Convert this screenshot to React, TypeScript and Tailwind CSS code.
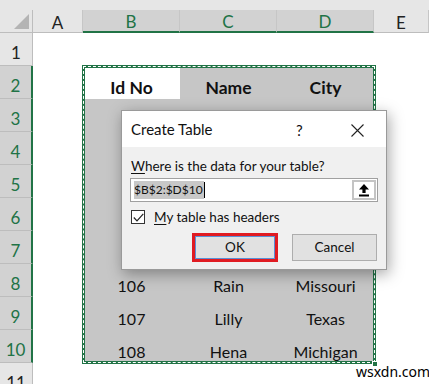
import { Fragment } from "react";

type Row = { n: number; b: string; c: string; d: string };

// rows 3-7 sit behind the dialog, so they are left empty
const rows: Row[] = [
	{ n: 1, b: "", c: "", d: "" },
	{ n: 2, b: "Id No", c: "Name", d: "City" },
	{ n: 3, b: "", c: "", d: "" },
	{ n: 4, b: "", c: "", d: "" },
	{ n: 5, b: "", c: "", d: "" },
	{ n: 6, b: "", c: "", d: "" },
	{ n: 7, b: "", c: "", d: "" },
	{ n: 8, b: "106", c: "Rain", d: "Missouri" },
	{ n: 9, b: "107", c: "Lilly", d: "Texas" },
	{ n: 10, b: "108", c: "Hena", d: "Michigan" },
	{ n: 11, b: "", c: "", d: "" },
];

const isSel = (n: number) => n >= 2 && n <= 10;

const ColHeader = ({ label, sel, w }: { label: string; sel: boolean; w: string }) => (
	<div
		className={`${w} flex items-center justify-center pt-[3px] border-r border-[#c6c6c6] ${
			sel
				? "bg-[#d2d2d2] text-[#217346] border-b-2 border-b-[#217346]"
				: "bg-[#e6e6e6] text-[#222] border-b border-b-[#bdbdbd]"
		}`}
	>
		{label}
	</div>
);

const UploadIcon = () => (
	<svg width="12" height="14" viewBox="0 0 12 14">
		<path d="M6 1 L11 6.5 L7.6 6.5 L7.6 10 L4.4 10 L4.4 6.5 L1 6.5 Z" fill="#000" />
		<rect x="1" y="11.5" width="10" height="2" fill="#000" />
	</svg>
);

const App = () => {
	return (
		<div
			className="relative w-[429px] h-[384px] overflow-hidden bg-white"
			style={{ fontFamily: "Lato, 'Liberation Sans', sans-serif" }}
		>
			<div className="h-[10px] bg-[#e6e6e6]" />
			<div className="flex h-[23px] text-[17px] leading-[20px]">
				<div className="w-[33px] relative bg-[#e6e6e6] border-r border-b border-[#bdbdbd]">
					<div className="absolute right-[3px] bottom-[3px] w-0 h-0 border-l-[15px] border-l-transparent border-b-[15px] border-b-[#b4b4b4]" />
				</div>
				<ColHeader label="A" sel={false} w="w-[50px]" />
				<ColHeader label="B" sel w="w-[97px]" />
				<ColHeader label="C" sel w="w-[97px]" />
				<ColHeader label="D" sel w="w-[97px]" />
				<ColHeader label="E" sel={false} w="flex-1" />
			</div>
			<div className="grid grid-cols-[33px_50px_97px_97px_97px_1fr] auto-rows-[33px] text-[16px] leading-[20px] text-[#111]">
				{rows.map((r) => {
					const sel = isSel(r.n);
					const fill = (first: boolean) =>
						sel && !(first && r.n === 2) ? "bg-[#c6c6c6]" : "bg-white";
					const bold = r.n === 2 ? "font-bold text-[17.5px]" : "";
					return (
						<Fragment key={r.n}>
							<div
								className={`flex items-end pb-[2px] justify-center text-[17px] border-b ${
									sel
										? "bg-[#d2d2d2] text-[#217346] border-b-[#bdbdbd] border-r-2 border-r-[#217346]"
										: "bg-[#e6e6e6] text-[#222] border-b-[#bdbdbd] border-r border-r-[#bdbdbd]"
								}`}
							>
								{r.n}
							</div>
							<div className="bg-white" />
							<div className={`flex items-end pb-[1px] justify-center ${fill(true)} ${bold}`}>{r.b}</div>
							<div className={`flex items-end pb-[1px] justify-center ${fill(false)} ${bold}`}>{r.c}</div>
							<div className={`flex items-end pb-[1px] justify-center ${fill(false)} ${bold}`}>{r.d}</div>
							<div className="bg-white" />
						</Fragment>
					);
				})}
			</div>

			{/* marching ants around the selected range */}
			<div className="absolute left-[82px] top-[65px] w-[294px] h-[299px] border-[3px] border-[#217346]">
				<div className="absolute inset-[-2px] border border-dashed border-white" />
			</div>
			<div className="absolute left-[372px] top-[361px] w-[6px] h-[6px] bg-[#217346] border border-white" />

			{/* Create Table dialog */}
			<div
				className="absolute left-[121px] top-[110px] w-[266px] h-[160px] bg-[#f0f0f0] border border-[#9a9a9a] shadow-[2px_4px_14px_rgba(0,0,0,0.35)] text-[13.5px] text-[#111]"
				style={{ fontFamily: "Lato, 'Noto Sans', sans-serif" }}
			>
				<div className="h-[36px] bg-white flex items-center pl-[9px] relative">
					<span className="text-[15px]">Create Table</span>
					<span className="absolute left-[174px] top-[8px] text-[15px]">?</span>
					<svg className="absolute left-[229px] top-[13px]" width="13" height="13" viewBox="0 0 13 13">
						<path d="M0.5 0.5 L12.5 12.5 M12.5 0.5 L0.5 12.5" stroke="#222" strokeWidth="1.1" />
					</svg>
				</div>
				<div className="px-[8px]">
					<div className="mt-[9px] pl-[1px] leading-[20px]">
						<span className="underline underline-offset-2">W</span>here is the data for your table?
					</div>
					<div className="mt-[2px] h-[24px] bg-white border border-[#a0a0a0] flex items-center pl-[3px]">
						<span className="bg-[#c8c8c8] text-[12px] leading-[18px] pr-[1px]">$B$2:$D$10</span>
						<span className="w-px h-[16px] bg-black" />
						<div className="ml-auto mr-[1px] w-[24px] h-[20px] bg-white border-2 border-[#c4c4c4] flex items-center justify-center">
							<UploadIcon />
						</div>
					</div>
					<div className="mt-[5px] flex items-center leading-[20px]">
						<div className="ml-[1px] w-[14px] h-[14px] bg-white border border-[#333] flex items-center justify-center">
							<svg width="11" height="9" viewBox="0 0 11 9">
								<path d="M0.8 4.5 L4 7.8 L10.3 0.8" stroke="#222" strokeWidth="1.2" fill="none" />
							</svg>
						</div>
						<span className="ml-[9px]">
							<span className="underline underline-offset-2">M</span>y table has headers
						</span>
					</div>
					<div className="mt-[6px] flex items-center">
						<div className="ml-[62px] w-[86px] h-[29px] border-[3px] border-[#e01b22] flex">
							<div className="flex-1 bg-[#e1e1e1] border border-[#5a8fd6] flex items-center justify-center">
								OK
							</div>
						</div>
						<div className="ml-[14px] w-[85px] h-[27px] bg-[#e1e1e1] border border-[#adadad] flex items-center justify-center">
							Cancel
						</div>
					</div>
				</div>
			</div>

			<div
				className="absolute left-[356px] top-[361px] text-[14px] text-black"
				style={{ fontFamily: "'Noto Sans', sans-serif" }}
			>
				wsxdn.com
			</div>
		</div>
	);
};

export default App;
